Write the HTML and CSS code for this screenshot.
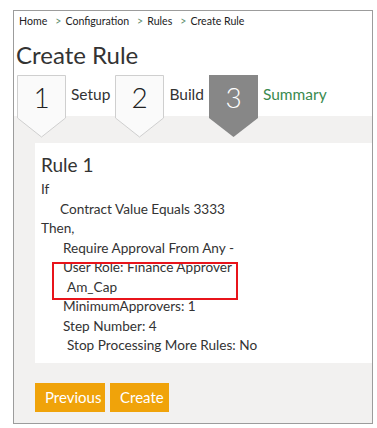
FILE: index.html
```html
<!DOCTYPE html>
<html lang="en">
<head>
    <meta charset="UTF-8">
    <meta name="viewport" content="width=device-width, initial-scale=1.0">
    <title>Create Rule</title>
    <link rel="stylesheet" href="styles.css">
</head>
<body>
    <div class="frame">
        <div class="breadcrumb">
            <a href="#">Home</a><span class="sep">&gt;</span><a href="#">Configuration</a><span class="sep">&gt;</span><a href="#">Rules</a><span class="sep">&gt;</span><span>Create Rule</span>
        </div>
        <h1>Create Rule</h1>

        <div class="steps">
            <div class="step">
                <svg width="49" height="63" viewBox="0 0 49 63">
                    <polygon points="0.5,0.5 48.5,0.5 48.5,43 24.5,62 0.5,43" fill="#fafafa" stroke="#cfcfcf"/>
                    <text x="24.5" y="33" text-anchor="middle">1</text>
                </svg>
            </div>
            <div class="step-label">Setup</div>
            <div class="step">
                <svg width="49" height="63" viewBox="0 0 49 63">
                    <polygon points="0.5,0.5 48.5,0.5 48.5,43 24.5,62 0.5,43" fill="#fafafa" stroke="#cfcfcf"/>
                    <text x="24.5" y="33" text-anchor="middle">2</text>
                </svg>
            </div>
            <div class="step-label">Build</div>
            <div class="step active">
                <svg width="49" height="63" viewBox="0 0 49 63">
                    <polygon points="0,0 49,0 49,43 24.5,62 0,43" fill="#878787"/>
                    <text x="24.5" y="33" text-anchor="middle">3</text>
                </svg>
            </div>
            <div class="step-label current">Summary</div>
        </div>

        <div class="band">
            <div class="panel">
                <h2>Rule 1</h2>
                <div class="line">If</div>
                <div class="line ind1">Contract Value Equals 3333</div>
                <div class="line">Then,</div>
                <div class="line ind2">Require Approval From Any -</div>
                <div class="highlight">
                    <div class="line ind2">User Role: Finance Approver</div>
                    <div class="line ind3">Am_Cap</div>
                </div>
                <div class="line ind2">MinimumApprovers: 1</div>
                <div class="line ind2">Step Number: 4</div>
                <div class="line ind3">Stop Processing More Rules: No</div>
            </div>

            <div class="actions">
                <button type="button" class="btn btn-prev">Previous</button>
                <button type="button" class="btn btn-create">Create</button>
            </div>
        </div>
    </div>
</body>
</html>
```

FILE: styles.css
```css
body {
    font-family: Lato, "Open Sans", sans-serif;
    background-color: #fff;
    color: #333;
    margin: 0;
}
.frame {
    margin: 10px 0 0 13px;
    width: 360px;
    height: 414px;
    box-sizing: border-box;
    border: 1px solid #9c9c9c;
    display: flex;
    flex-direction: column;
    overflow: hidden;
}
.breadcrumb {
    padding: 2px 0 0 5px;
    font-size: 10.6px;
    line-height: 16px;
    color: #222;
}
.breadcrumb a {
    color: #222;
    text-decoration: none;
}
.breadcrumb .sep {
    color: #5f8f6f;
    margin: 0 4px 0 8px;
}
h1 {
    margin: 11px 0 0 2px;
    font-size: 24px;
    line-height: 30px;
    font-weight: normal;
    color: #333;
}
.steps {
    display: flex;
    align-items: flex-start;
    height: 41px;
    margin-top: 5px;
    padding-left: 3px;
    flex-shrink: 0;
}
.step {
    position: relative;
    z-index: 1;
    width: 49px;
    height: 63px;
}
.step svg {
    display: block;
}
.step text {
    font-family: Lato, "Open Sans", sans-serif;
    font-size: 28px;
    font-weight: 300;
    fill: #222;
}
.step.active text {
    fill: #fff;
}
.step-label {
    font-size: 15.5px;
    line-height: 20px;
    margin: 9px 5px 0 5px;
    color: #333;
}
.step-label.current {
    color: #3a8a4f;
}
.band {
    flex: 1;
    background: #f2f1f0;
    padding: 27px 0 0 21px;
}
.panel {
    background: #fff;
    padding: 10px 6px 7px;
}
h2 {
    margin: 0 0 3px;
    font-size: 19px;
    line-height: 24px;
    font-weight: normal;
    color: #333;
}
.line {
    font-size: 13.6px;
    line-height: 19.5px;
    color: #333;
    white-space: nowrap;
}
.ind1 {
    padding-left: 19px;
}
.ind2 {
    padding-left: 22px;
}
.ind3 {
    padding-left: 26px;
}
.highlight {
    position: relative;
}
.highlight::after {
    content: "";
    position: absolute;
    left: 11px;
    top: 4px;
    width: 186px;
    height: 38px;
    box-sizing: border-box;
    border: 2px solid #e8141b;
}
.actions {
    display: flex;
    gap: 5px;
    margin-top: 20px;
}
.btn {
    font-family: Lato, "Open Sans", sans-serif;
    font-size: 15px;
    height: 29px;
    padding: 0 10px;
    background-color: #f0a30a;
    color: #fff;
    border: none;
    cursor: pointer;
}
.btn-prev {
    width: 70px;
}
.btn-create {
    width: 59px;
}
```
